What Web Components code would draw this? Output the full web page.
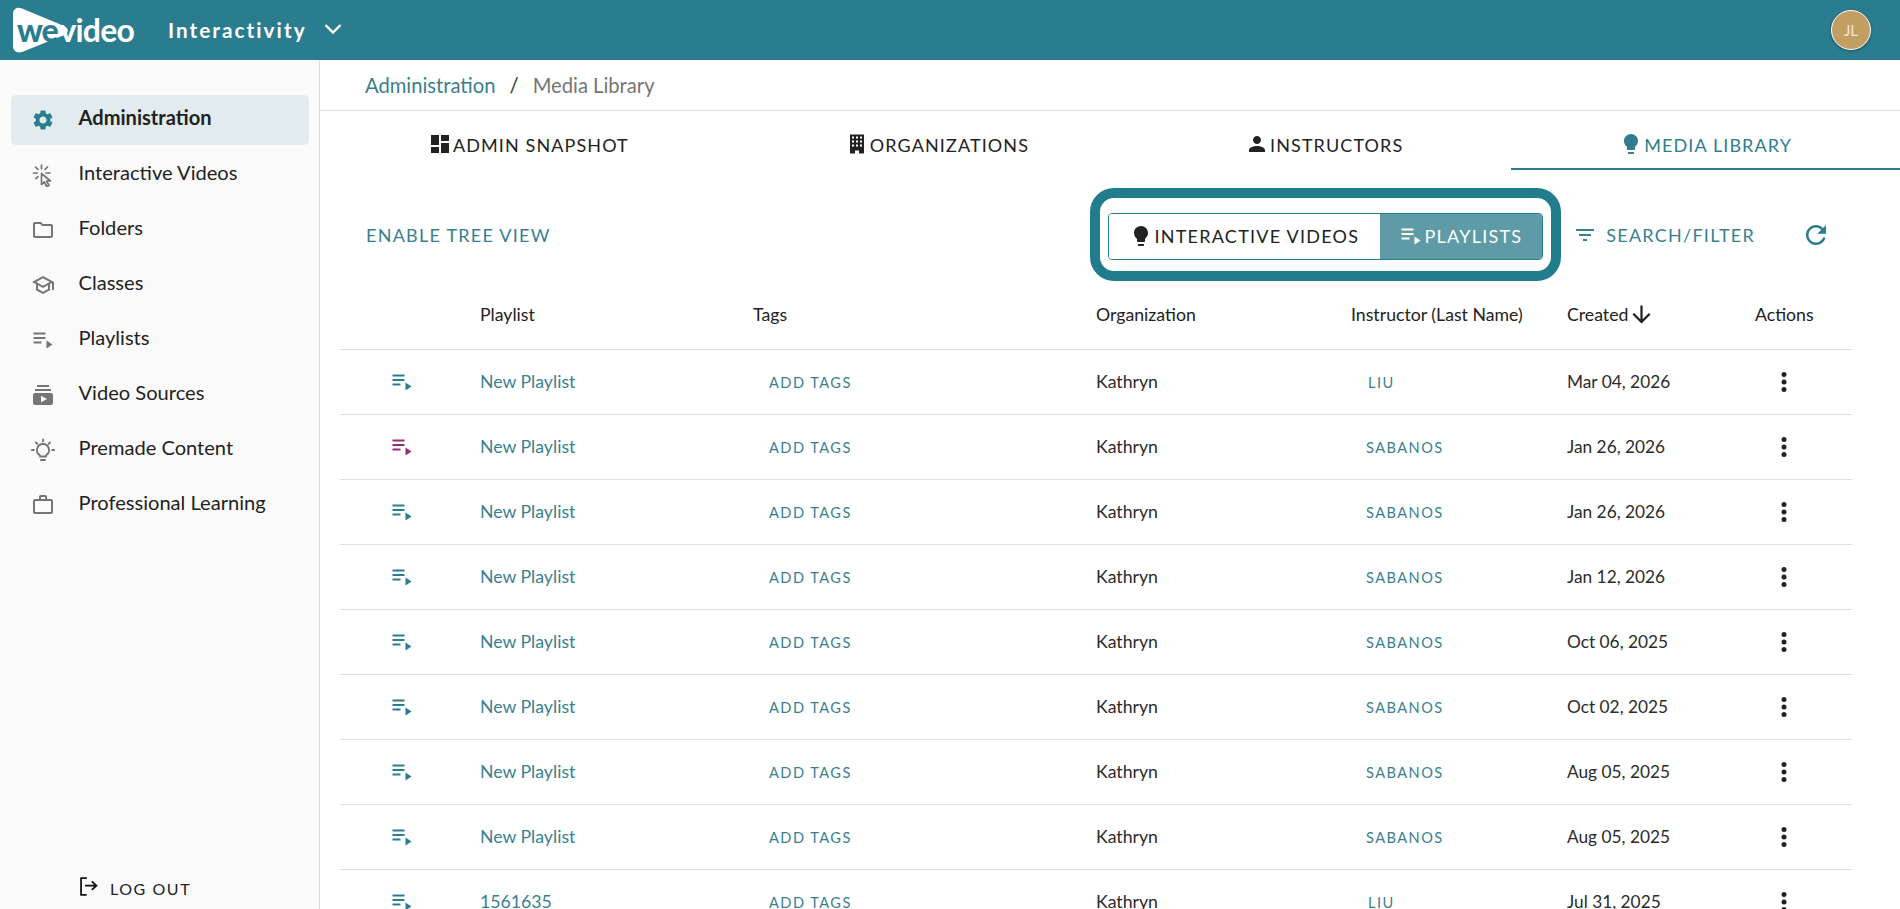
<!DOCTYPE html>
<html lang="en">
<head>
<meta charset="utf-8">
<title>WeVideo Interactivity - Media Library</title>
<style>
  html, body { margin: 0; height: 100%; overflow: hidden; background: #fff; }
  body { font-family: Lato, "Liberation Sans", sans-serif; color: #222; }
</style>
</head>
<body>
<wv-app></wv-app>

<script>
const ICONS = {
  gear: `<path fill="currentColor" d="M19.14 12.94c.04-.3.06-.61.06-.94 0-.32-.02-.64-.07-.94l2.03-1.58c.18-.14.23-.41.12-.61l-1.92-3.32c-.12-.22-.37-.29-.59-.22l-2.39.96c-.5-.38-1.03-.7-1.62-.94l-.36-2.54c-.04-.24-.24-.41-.48-.41h-3.84c-.24 0-.43.17-.47.41l-.36 2.54c-.59.24-1.13.57-1.62.94l-2.39-.96c-.22-.08-.47 0-.59.22L2.74 8.87c-.12.21-.08.47.12.61l2.03 1.58c-.05.3-.09.63-.09.94s.02.64.07.94l-2.03 1.58c-.18.14-.23.41-.12.61l1.92 3.32c.12.22.37.29.59.22l2.39-.96c.5.38 1.03.7 1.62.94l.36 2.54c.05.24.24.41.48.41h3.84c.24 0 .44-.17.47-.41l.36-2.54c.59-.24 1.13-.56 1.62-.94l2.39.96c.22.08.47 0 .59-.22l1.92-3.32c.12-.22.07-.47-.12-.61l-2.01-1.58zM12 15.6c-1.98 0-3.6-1.62-3.6-3.6s1.62-3.6 3.6-3.6 3.6 1.62 3.6 3.6-1.62 3.6-3.6 3.6z"/>`,
  click: `<g fill="none" stroke="currentColor" stroke-width="1.7" stroke-linecap="round"><path d="M10.5 2v3.8M4.5 4l2.4 2.4M16.5 4l-2.4 2.4M2.5 10h3.8M15 10h4M5 15.5l2-1.8"/><path stroke-linejoin="round" d="M10.5 10.5v11l2.8-2.5 2.4 4.5 2.3-1.1-2.4-4.4h3.9z"/></g>`,
  folder: `<path fill="currentColor" d="M9.17 6l2 2H20v10H4V6h5.17M10 4H4c-1.1 0-1.99.9-1.99 2L2 18c0 1.1.9 2 2 2h16c1.1 0 2-.9 2-2V8c0-1.1-.9-2-2-2h-8l-2-2z"/>`,
  school: `<path fill="currentColor" d="M12 3L1 9l4 2.18v6L12 21l7-3.82v-6l2-1.09V17h2V9L12 3zm6.82 6L12 12.72 5.18 9 12 5.28 18.82 9zM17 15.99l-5 2.73-5-2.73v-3.72L12 15l5-2.73v3.72z"/>`,
  playlist: `<path fill="currentColor" d="M2.5 4.5h12v2h-12zM2.5 9h12v2h-12zM2.5 13.5h8v2h-8zM15.500 12.5v8l6-4z"/>`,
  sources: `<path fill="currentColor" d="M20 8H4V6h16v2zm-2-6H6v2h12V2zm4 10v8c0 1.1-.9 2-2 2H4c-1.1 0-2-.9-2-2v-8c0-1.1.9-2 2-2h16c1.1 0 2 .9 2 2zm-6 4l-6-3.27v6.53L16 16z"/>`,
  tips: `<g fill="none" stroke="currentColor" stroke-width="1.9" stroke-linecap="round"><path d="M12 6a6 6 0 0 0-3.5 10.9c.5.4.7 1 .7 1.6h5.6c0-.6.2-1.2.7-1.6A6 6 0 0 0 12 6z"/><path d="M10 22h4M12 1.5v2M5 4.5l1.3 1.3M19 4.5l-1.3 1.3M.8 12h2M21.2 12h2"/></g>`,
  work: `<path fill="currentColor" d="M14 6V4h-4v2h4zM4 8v11h16V8H4zm16-2c1.11 0 2 .89 2 2v11c0 1.11-.89 2-2 2H4c-1.11 0-2-.89-2-2l.01-11c0-1.11.88-2 1.99-2h4V4c0-1.11.89-2 2-2h4c1.11 0 2 .89 2 2v2h4z"/>`,
  logout: `<g fill="none" stroke="currentColor" stroke-width="2" stroke-linecap="square"><path d="M9 2.5H3.5v19H9"/><path d="M9 11h12M16.5 6.8l4.5 4.2-4.5 4.2"/></g>`,
  dashboard: `<path fill="currentColor" d="M3 13h8V3H3v10zm0 8h8v-6H3v6zm10 0h8V11h-8v10zm0-18v6h8V3h-8z"/>`,
  building: `<path fill="currentColor" fill-rule="evenodd" d="M5 2.5h14v19h-5v-3h-4v3H5zM7 4.5v2h2v-2zm4 0v2h2v-2zm4 0v2h2v-2zM7 8.500v2h2v-2zm4 0v2h2v-2zm4 0v2h2v-2zM7 12.500v2h2v-2zm4 0v2h2v-2zm4 0v2h2v-2z"/>`,
  person: `<path fill="currentColor" d="M12 12c2.21 0 4-1.79 4-4s-1.79-4-4-4-4 1.79-4 4 1.79 4 4 4zm0 2c-2.67 0-8 1.34-8 4v2h16v-2c0-2.66-5.33-4-8-4z"/>`,
  bulb: `<path fill="currentColor" d="M9 21c0 .5.4 1 1 1h4c.6 0 1-.5 1-1v-1H9v1zm3-19C8.1 2 5 5.1 5 9c0 2.4 1.2 4.5 3 5.7V17c0 .5.4 1 1 1h6c.6 0 1-.5 1-1v-2.3c1.8-1.3 3-3.4 3-5.7 0-3.9-3.1-7-7-7z"/>`,
  filter: `<path fill="currentColor" d="M10 18h4v-2h-4v2zM3 6v2h18V6H3zm3 7h12v-2H6v2z"/>`,
  refresh: `<path fill="currentColor" d="M17.65 6.35C16.2 4.9 14.21 4 12 4c-4.42 0-7.99 3.58-7.99 8s3.57 8 7.99 8c3.73 0 6.84-2.55 7.73-6h-2.08c-.82 2.33-3.04 4-5.65 4-3.31 0-6-2.69-6-6s2.69-6 6-6c1.66 0 3.14.69 4.22 1.78L13 11h7V4l-2.35 2.35z"/>`,
  down: `<path fill="currentColor" d="M20 12l-1.41-1.41L13 16.17V4h-2v12.17l-5.58-5.59L4 12l8 8 8-8z"/>`,
  dots: `<g fill="currentColor"><circle cx="12" cy="4.5" r="2.5"/><circle cx="12" cy="12" r="2.5"/><circle cx="12" cy="19.5" r="2.5"/></g>`,
  chevron: `<path fill="none" stroke="currentColor" stroke-width="2.4" d="M4.5 8l7.5 7.5L19.5 8"/>`
};

class WvIcon extends HTMLElement {
  connectedCallback() {
    const size = this.getAttribute("size") || 24;
    this.attachShadow({mode: "open"}).innerHTML = `
      <style>
        :host { display: inline-flex; flex: none; line-height: 0; }
      </style>
      <svg width="${size}" height="${size}" viewBox="0 0 24 24">${ICONS[this.getAttribute("name")]}</svg>`;
  }
}
customElements.define("wv-icon", WvIcon);

class WvTopbar extends HTMLElement {
  constructor() {
    super();
    this.attachShadow({mode: "open"}).innerHTML = `
      <style>
        :host { display: flex; align-items: center; height: 60px; background: #2a7c8f; color: #fff; flex: none; padding: 0 29px 0 12px; box-sizing: border-box; }
        .logo { position: relative; display: flex; align-items: center; width: 122px; height: 46px; }
        .logo svg { position: absolute; left: 0; top: 0; }
        .we, .video { position: relative; font-family: Lato, sans-serif; line-height: 1; }
        .we { color: #2a7c8f; font-size: 32px; font-weight: 900; letter-spacing: -1.2px; margin-left: 5px; }
        .video { color: #fff; font-size: 32px; font-weight: 700; letter-spacing: -.8px; margin-left: 2px; }
        .title { font-size: 20.7px; font-weight: 700; letter-spacing: 2.05px; margin-left: 34px; }
        wv-icon { margin-left: 14px; margin-top: -3px; }
        .avatar { margin-left: auto; width: 40px; height: 40px; border-radius: 50%; border: 1px solid #fff; box-sizing: border-box; background: #c19f62; color: #f0e6d0; font-size: 15px; display: flex; align-items: center; justify-content: center; box-shadow: 0 1px 3px rgba(0,0,0,.3); }
      </style>
      <div class="logo">
        <svg width="62" height="46" viewBox="0 0 62 46"><path fill="#fff" d="M1 7C1 2 5 -.5 10 1.5L52 19c5 2.5 5 6.5 .5 9L10 45c-5 1.5-9-1-9-6z"/></svg>
        <span class="we">we</span><span class="video">video</span>
      </div>
      <span class="title">Interactivity</span>
      <wv-icon name="chevron" size="24"></wv-icon>
      <span class="avatar">JL</span>`;
  }
}
customElements.define("wv-topbar", WvTopbar);

class WvNavItem extends HTMLElement {
  connectedCallback() {
    this.attachShadow({mode: "open"}).innerHTML = `
      <style>
        :host { display: flex; align-items: center; height: 50px; border-radius: 5px; padding-left: 20px; color: #757575; font-size: 20.1px; }
        :host([active]) { background: #e2ecee; color: #2a7c8f; font-weight: 700; }
        span { margin-left: 23.5px; color: #222; margin-top: -6px; }
      </style>
      <wv-icon name="${this.getAttribute("icon")}" size="24"></wv-icon>
      <span><slot></slot></span>`;
  }
}
customElements.define("wv-nav-item", WvNavItem);

class WvSidebar extends HTMLElement {
  constructor() {
    super();
    this.attachShadow({mode: "open"}).innerHTML = `
      <style>
        :host { display: flex; flex-direction: column; width: 320px; flex: none; box-sizing: border-box; background: #fafafa; border-right: 1px solid #dcdcdc; padding: 35px 10px 0 11px; gap: 5px; }
        .logout { margin-top: auto; display: flex; align-items: center; gap: 11px; padding: 0 0 5px 67px; height: 32px; font-size: 16px; letter-spacing: 1.55px; color: #222; }
        .logout wv-icon { color: #111; margin-top: -3px; }
      </style>
      <slot></slot>
      <div class="logout"><wv-icon name="logout" size="21"></wv-icon><span>LOG OUT</span></div>`;
  }
}
customElements.define("wv-sidebar", WvSidebar);

class WvBreadcrumb extends HTMLElement {
  constructor() {
    super();
    this.attachShadow({mode: "open"}).innerHTML = `
      <style>
        :host { display: flex; align-items: center; height: 51px; box-sizing: border-box; border-bottom: 1px solid #dfdfdf; padding: 2px 0 2px 45px; font-size: 20.2px; flex: none; }
        .link { color: #3a7f90; }
        .sep { color: #333; margin: 0 14px; }
        .current { color: #757575; }
      </style>
      <span class="link">Administration</span><span class="sep">/</span><span class="current">Media Library</span>`;
  }
}
customElements.define("wv-breadcrumb", WvBreadcrumb);

class WvTab extends HTMLElement {
  connectedCallback() {
    this.attachShadow({mode: "open"}).innerHTML = `
      <style>
        :host { display: flex; flex: 1 1 auto; align-items: center; justify-content: center; gap: 1px; box-sizing: border-box; height: 59px; padding-top: 10px; border-bottom: 2px solid transparent; color: #222; font-size: 18px; letter-spacing: 1.1px; }
        :host([active]) { color: #2f7d8f; border-bottom-color: #2a7c8f; }
        wv-icon { margin-top: -2px; }
      </style>
      <wv-icon name="${this.getAttribute("icon")}" size="24"></wv-icon>
      <span><slot></slot></span>`;
  }
}
customElements.define("wv-tab", WvTab);

class WvToolbar extends HTMLElement {
  constructor() {
    super();
    this.attachShadow({mode: "open"}).innerHTML = `
      <style>
        :host { display: flex; align-items: center; padding: 18px 69px 0 46px; flex: none; font-size: 18px; letter-spacing: 1.25px; color: #3a7f90; }
        .tree { margin-right: auto; }
        .highlight { box-sizing: border-box; width: 471px; height: 93px; border: 10px solid #217c8c; border-radius: 24px; padding: 3px 8px 0 8px; display: flex; align-items: center; }
        .toggle { display: flex; width: 100%; height: 47px; box-sizing: border-box; border: 1px solid #2a7c8f; border-radius: 4px; overflow: hidden; }
        .opt { display: flex; align-items: center; justify-content: center; gap: 1px; height: 100%; }
        .opt.off { width: 271px; color: #222; background: #fff; }
        .opt.on { flex: 1; color: #fff; background: #5e9ba6; }
        .search { display: flex; align-items: center; gap: 9px; margin-left: 12.4px; }
        .refresh { margin-left: 46px; color: #2a7c8f; display: flex; }
      </style>
      <span class="tree">ENABLE TREE VIEW</span>
      <div class="highlight">
        <div class="toggle">
          <div class="opt off"><wv-icon name="bulb" size="24"></wv-icon><span>INTERACTIVE VIDEOS</span></div>
          <div class="opt on"><wv-icon name="playlist" size="24"></wv-icon><span>PLAYLISTS</span></div>
        </div>
      </div>
      <div class="search"><wv-icon name="filter" size="24"></wv-icon><span>SEARCH/FILTER</span></div>
      <span class="refresh"><wv-icon name="refresh" size="30"></wv-icon></span>`;
  }
}
customElements.define("wv-toolbar", WvToolbar);

const COLS = "140px 273px 343px 255px 216px 188px 96px";

class WvTableHead extends HTMLElement {
  constructor() {
    super();
    this.attachShadow({mode: "open"}).innerHTML = `
      <style>
        :host { display: grid; grid-template-columns: ${COLS}; align-items: center; height: 69px; box-sizing: border-box; padding-bottom: 2px; border-bottom: 1px solid #dfdfdf; font-size: 17.7px; color: #222; flex: none; }
        .created { display: flex; align-items: center; }
      </style>
      <span></span><span>Playlist</span><span>Tags</span><span>Organization</span><span>Instructor (Last Name)</span>
      <span class="created">Created<wv-icon name="down" size="27"></wv-icon></span><span>Actions</span>`;
  }
}
customElements.define("wv-table-head", WvTableHead);

class WvRow extends HTMLElement {
  connectedCallback() {
    const instructor = this.getAttribute("instructor");
    const color = this.getAttribute("color") || "#2a7c8f";
    const indent = instructor === "LIU" ? 17 : 15;
    this.attachShadow({mode: "open"}).innerHTML = `
      <style>
        :host { display: grid; grid-template-columns: ${COLS}; align-items: center; height: 65px; box-sizing: border-box; border-bottom: 1px solid #dfdfdf; font-size: 17.7px; color: #2b2b2b; flex: none; }
        .ico { padding-left: 50px; display: flex; color: ${color}; }
        .txt { margin-top: -2px; }
        .name { color: #3a7f90; }
        .date { font-size: 17.3px; }
        .chip { font-size: 14.6px; letter-spacing: 1.45px; color: #3a7f90; }
        .tag { padding-left: 16px; }
        .inst { padding-left: ${indent}px; }
        .more { padding-left: 17px; display: flex; color: #222; }
      </style>
      <span class="ico"><wv-icon name="playlist" size="24"></wv-icon></span>
      <span class="txt name">${this.getAttribute("name")}</span>
      <span class="chip tag">ADD TAGS</span>
      <span class="txt">Kathryn</span>
      <span class="chip inst">${instructor}</span>
      <span class="txt date">${this.getAttribute("date")}</span>
      <span class="more"><wv-icon name="dots" size="24"></wv-icon></span>`;
  }
}
customElements.define("wv-row", WvRow);

class WvApp extends HTMLElement {
  constructor() {
    super();
    const rows = [
      ["New Playlist", "LIU", "Mar 04, 2026"],
      ["New Playlist", "SABANOS", "Jan 26, 2026", "#9c2a6f"],
      ["New Playlist", "SABANOS", "Jan 26, 2026"],
      ["New Playlist", "SABANOS", "Jan 12, 2026"],
      ["New Playlist", "SABANOS", "Oct 06, 2025"],
      ["New Playlist", "SABANOS", "Oct 02, 2025"],
      ["New Playlist", "SABANOS", "Aug 05, 2025"],
      ["New Playlist", "SABANOS", "Aug 05, 2025"],
      ["1561635", "LIU", "Jul 31, 2025"]
    ];
    this.attachShadow({mode: "open"}).innerHTML = `
      <style>
        :host { display: flex; flex-direction: column; height: 909px; overflow: hidden; font-family: Lato, "Liberation Sans", sans-serif; }
        .body { display: flex; flex: 1; min-height: 0; }
        main { flex: 1; min-width: 0; display: flex; flex-direction: column; overflow: hidden; }
        .tabs { display: flex; flex: none; }
        .table { display: flex; flex-direction: column; margin: 0 48px 0 20px; }
      </style>
      <wv-topbar></wv-topbar>
      <div class="body">
        <wv-sidebar>
          <wv-nav-item icon="gear" active>Administration</wv-nav-item>
          <wv-nav-item icon="click">Interactive Videos</wv-nav-item>
          <wv-nav-item icon="folder">Folders</wv-nav-item>
          <wv-nav-item icon="school">Classes</wv-nav-item>
          <wv-nav-item icon="playlist">Playlists</wv-nav-item>
          <wv-nav-item icon="sources">Video Sources</wv-nav-item>
          <wv-nav-item icon="tips">Premade Content</wv-nav-item>
          <wv-nav-item icon="work">Professional Learning</wv-nav-item>
        </wv-sidebar>
        <main>
          <wv-breadcrumb></wv-breadcrumb>
          <div class="tabs">
            <wv-tab icon="dashboard">ADMIN SNAPSHOT</wv-tab>
            <wv-tab icon="building">ORGANIZATIONS</wv-tab>
            <wv-tab icon="person">INSTRUCTORS</wv-tab>
            <wv-tab icon="bulb" active>MEDIA LIBRARY</wv-tab>
          </div>
          <wv-toolbar></wv-toolbar>
          <div class="table">
            <wv-table-head></wv-table-head>
            ${rows.map(r => `<wv-row name="${r[0]}" instructor="${r[1]}" date="${r[2]}" ${r[3] ? `color="${r[3]}"` : ""}></wv-row>`).join("")}
          </div>
        </main>
      </div>`;
  }
}
customElements.define("wv-app", WvApp);
</script>
</body>
</html>
